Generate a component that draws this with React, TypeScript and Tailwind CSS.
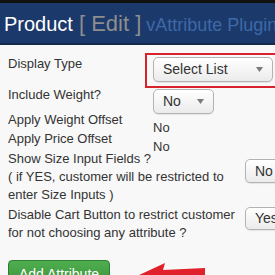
const Caret = () => (
  <svg width="7" height="5" viewBox="0 0 7 5" className="shrink-0">
    <path d="M0 0 L7 0 L3.5 5 Z" fill="#7a7a7a" />
  </svg>
);

const FakeSelect = ({ label, className }: { label: string; className: string }) => (
  <div
    className={`flex items-center justify-between rounded-[5px] border border-[#b3b3b3] bg-gradient-to-b from-white to-[#ebebeb] pl-[9px] pr-[9px] text-[14px] text-[#333] shadow-[0_1px_1px_rgba(0,0,0,0.08)] ${className}`}
  >
    <span>{label}</span>
    <Caret />
  </div>
);

export default function App() {
  return (
    <div className="relative h-[275px] w-[275px] overflow-hidden bg-[#f8f8f8] font-['Liberation_Sans',Arial,sans-serif] text-[13px] text-[#333]">
      {/* Header */}
      <div className="h-[45px] border-t-[3px] border-b-2 border-t-[#111] border-b-[#15294c] bg-[#1c396b] pl-1 pt-[10px]">
        <div className="flex items-baseline whitespace-nowrap">
          <span className="text-[20px] leading-none text-white">Product</span>
          <span className="ml-[6px] text-[22px] leading-none text-[#8e8e8e]">[ Edit ]</span>
          <span className="ml-[5px] text-[18px] leading-none text-[#3d69a8]">vAttribute Plugin</span>
        </div>
      </div>

      <div className="pl-2">
        {/* Display Type */}
        <div className="mt-[8px] flex items-start">
          <div className="w-[137px] shrink-0 pt-[1px] leading-[19px]">Display Type</div>
          <div className="w-[150px] shrink-0 border-2 border-[#d8222c] pb-[4px] pl-[6px] pt-[2px]">
            <FakeSelect label="Select List" className="h-[25px] w-[120px]" />
          </div>
        </div>

        {/* Include Weight */}
        <div className="flex items-start">
          <div className="-mt-[3px] w-[145px] shrink-0 leading-[19px]">Include Weight?</div>
          <FakeSelect label="No" className="mt-[1px] h-[25px] w-[61px] shrink-0" />
        </div>

        {/* Offsets */}
        <div className="flex items-start">
          <div className="-mt-[4px] w-[145px] shrink-0 leading-[19px]">
            <div>Apply Weight Offset</div>
            <div>Apply Price Offset</div>
          </div>
          <div className="mt-[4px] leading-[19px]">
            <div>No</div>
            <div>No</div>
          </div>
        </div>

        {/* Show Size Input Fields */}
        <div className="flex items-start">
          <div className="-mt-[6px] w-[237px] shrink-0 leading-[18px]">
            Show Size Input Fields ?
            <br />( if YES, customer will be restricted to enter Size Inputs )
          </div>
          <FakeSelect label="No" className="mt-[3px] h-[24px] w-[61px] shrink-0" />
        </div>

        {/* Disable Cart Button */}
        <div className="flex items-start">
          <div className="mt-[2px] w-[237px] shrink-0 leading-[18px]">
            Disable Cart Button to restrict customer for not choosing any attribute ?
          </div>
          <FakeSelect label="Yes" className="mt-[3px] h-[23px] w-[61px] shrink-0" />
        </div>

        <button className="mt-[18px] h-[28px] w-[102px] rounded-[4px] border border-[#2f7d2f] bg-gradient-to-b from-[#4fae4f] to-[#3a903a] text-[14px] leading-[26px] text-white">
          Add Attribute
        </button>
      </div>

      {/* Red arrow */}
      <svg className="absolute left-[135px] top-[260px]" width="72" height="16" viewBox="0 0 72 16">
        <polygon points="2,16 30,3 28,10 70,8 70,16" fill="#e0202a" />
      </svg>
    </div>
  );
}
